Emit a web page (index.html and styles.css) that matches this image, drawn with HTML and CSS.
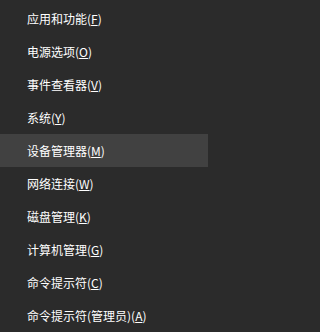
FILE: index.html
```html
<!DOCTYPE html>
<html lang="zh-CN">
<head>
<meta charset="utf-8">
<link rel="stylesheet" href="styles.css">
</head>
<body>
<ul class="menu">
  <li class="item">应用和功能(<span class="key">F</span>)</li>
  <li class="item">电源选项(<span class="key">O</span>)</li>
  <li class="item">事件查看器(<span class="key">V</span>)</li>
  <li class="item">系统(<span class="key">Y</span>)</li>
  <li class="item active">设备管理器(<span class="key">M</span>)</li>
  <li class="item">网络连接(<span class="key">W</span>)</li>
  <li class="item">磁盘管理(<span class="key">K</span>)</li>
  <li class="item">计算机管理(<span class="key">G</span>)</li>
  <li class="item">命令提示符(<span class="key">C</span>)</li>
  <li class="item">命令提示符(管理员)(<span class="key">A</span>)</li>
</ul>
</body>
</html>
```
FILE: styles.css
```css
html, body {
  margin: 0;
  padding: 0;
  background: #2b2b2b;
}
body {
  width: 208px;
  height: 332px;
  overflow: hidden;
  font-family: "Noto Sans CJK SC", "Noto Sans", sans-serif;
  font-size: 12px;
  color: #ffffff;
}
.menu {
  list-style: none;
  margin: 0;
  padding: 2px 0 0 0;
  display: flex;
  flex-direction: column;
}
.item {
  height: 33px;
  display: flex;
  align-items: center;
  padding-left: 27px;
  white-space: nowrap;
}
.item.active {
  background: #414141;
}
.key {
  text-decoration: underline;
  text-underline-offset: 1px;
}
```
